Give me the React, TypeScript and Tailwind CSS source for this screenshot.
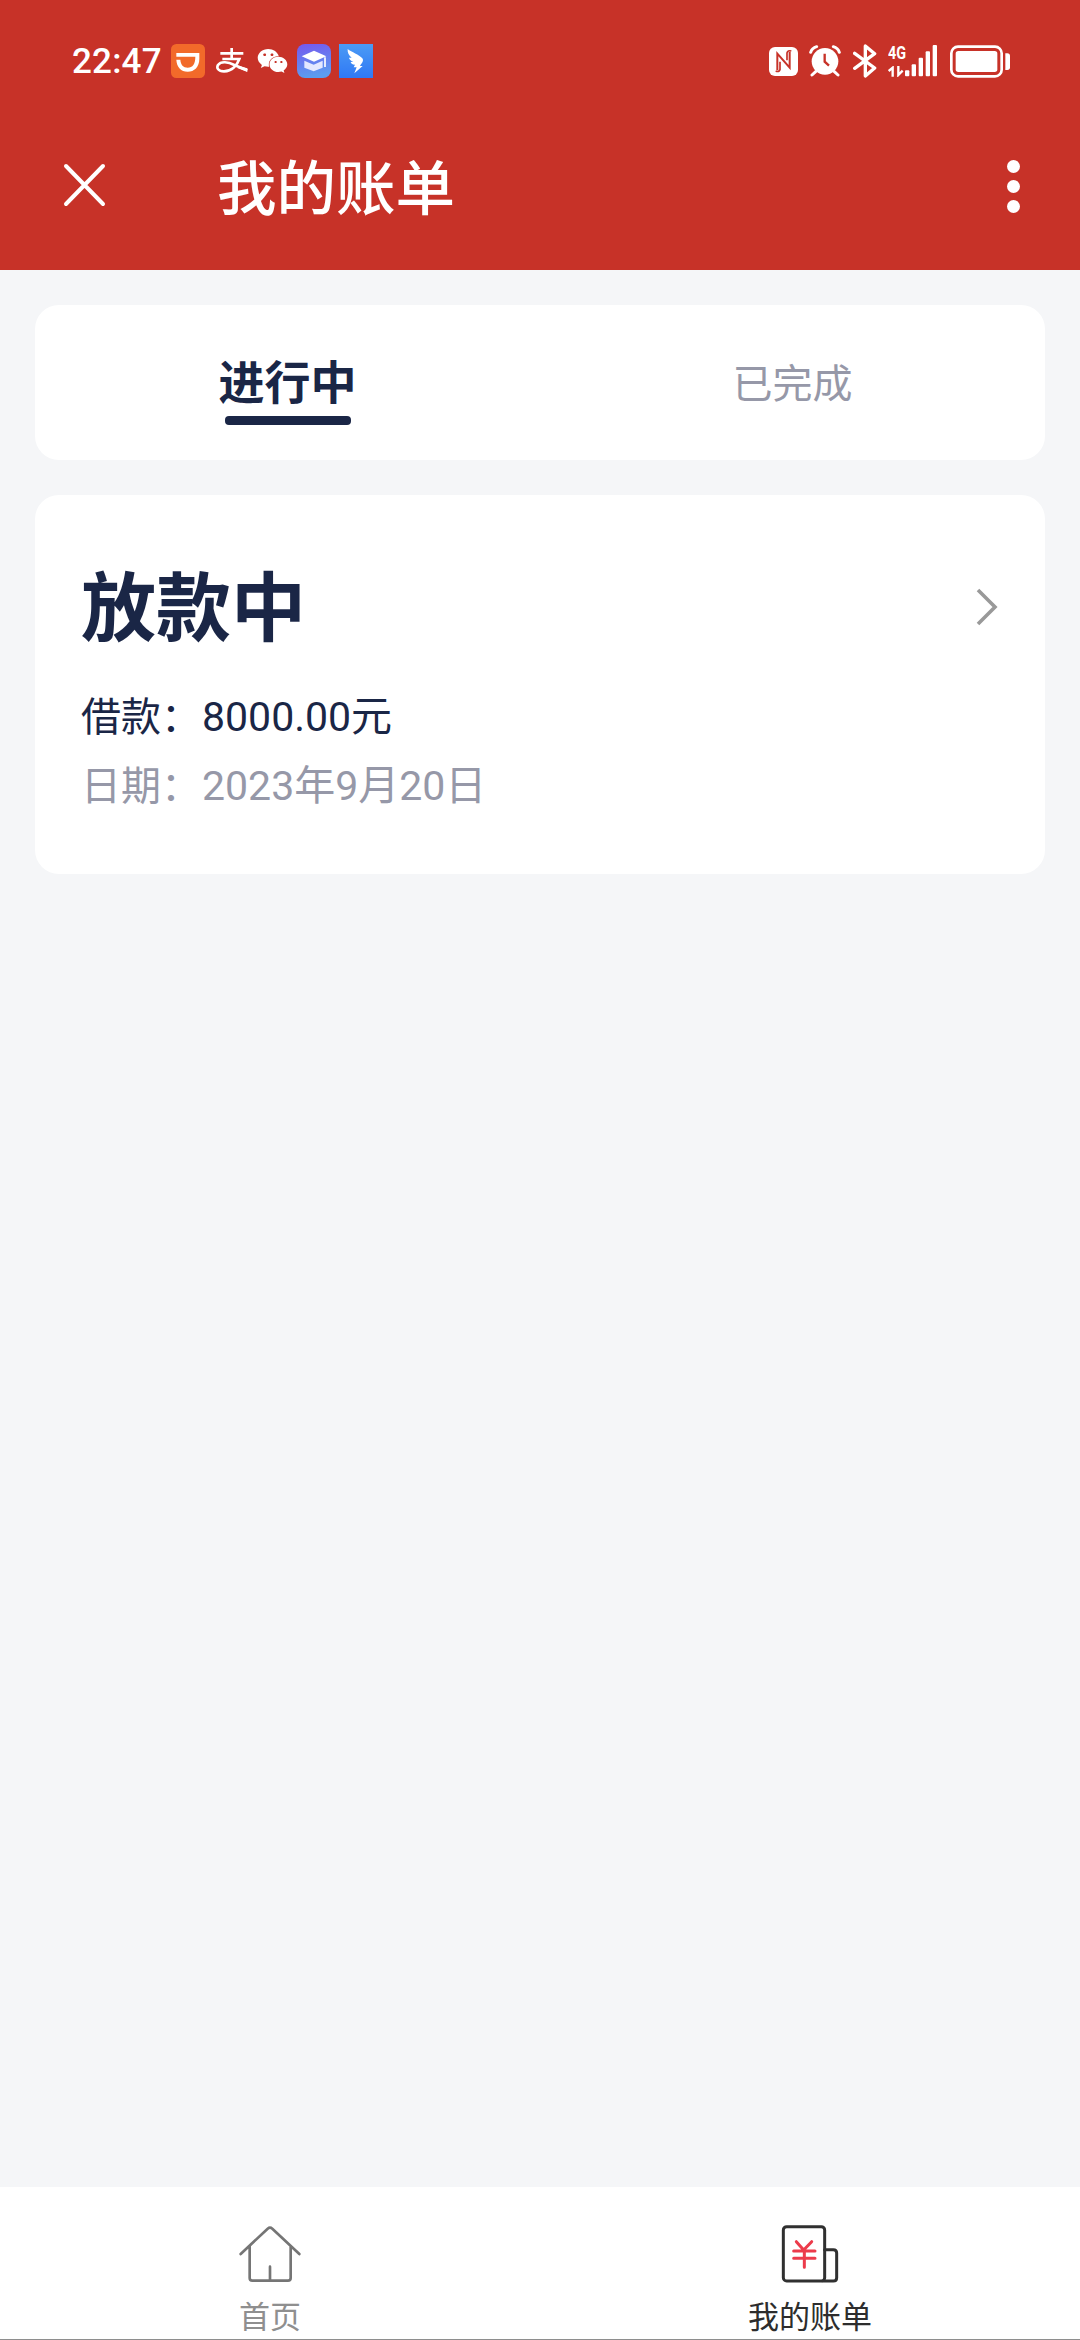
import { useState } from 'react';
import { FaWeixin } from 'react-icons/fa';

type Bill = {
  status: string;
  amount: string;
  date: string;
};

const bills: Bill[] = [{ status: '放款中', amount: '8000.00元', date: '2023年9月20日' }];

function StatusBar() {
  return (
    <div className="h-[122px] flex items-center justify-between pl-[71px] pr-[70px]">
      <div className="flex items-center">
        <span className="w-[100px] pl-px pt-[2px] text-[35px] leading-[34px] font-medium tracking-[0.2px] font-['Roboto',sans-serif]">22:47</span>

        {/* didi */}
        <svg className="w-[34px] h-[34px]" viewBox="0 0 102 102">
          <rect width="102" height="102" rx="16" fill="#f26a2a" />
          <path d="M16 27H85V44C85 69 70 83 50 83C30 83 17 69 16 47H28C29 62 37 71 50 71C65 71 73 60 73 38H16z" fill="#fff" />
        </svg>

        {/* alipay */}
        <svg className="w-[32px] h-[26px] ml-[11px]" viewBox="0 0 96 78" fill="none" stroke="#fff" strokeWidth="8">
          <path d="M13 16H82M47 0V32M19 33H70C64 50 49 69 24 70C6 70 1 60 6 51C15 38 37 42 55 51L94 67" />
          <path d="M72 55L94 61V72L64 60z" fill="#fff" stroke="none" />
        </svg>

        <FaWeixin className="w-[31px] h-[28px] ml-[9px]" />

        {/* school */}
        <svg className="w-[34px] h-[34px] ml-[9px]" viewBox="0 0 102 102">
          <defs>
            <linearGradient id="school" x1="0" y1="0" x2="0.2" y2="1">
              <stop offset="0" stopColor="#7657ee" />
              <stop offset="1" stopColor="#5b9cf0" />
            </linearGradient>
          </defs>
          <rect width="102" height="102" rx="24" fill="url(#school)" />
          <path d="M14 37L51 20L88 37L51 53z" fill="#fff" />
          <path d="M22 50L50 62L77 50V71L50 82L22 71z" fill="#e4e8ff" />
          <path d="M84 40V69" stroke="#fff" strokeWidth="5" />
        </svg>

        {/* dingtalk */}
        <svg className="w-[34px] h-[34px] ml-[8px]" viewBox="0 0 102 102">
          <defs>
            <linearGradient id="ding" x1="0" y1="0" x2="0" y2="1">
              <stop offset="0" stopColor="#4b9bf5" />
              <stop offset="1" stopColor="#2f78f5" />
            </linearGradient>
          </defs>
          <rect width="102" height="102" fill="url(#ding)" />
          <path d="M26 15C38 25 60 31 70 43C76 51 67 59 63 66H71L46 88L53 70H44L48 62C39 62 36 58 35 54L43 53C35 50 31 46 30 41L38 41C29 34 25 26 26 15z" fill="#fff" />
        </svg>
      </div>

      <div className="flex items-center">
        {/* nfc */}
        <svg className="w-[29px] h-[29px]" viewBox="0 0 87 87">
          <rect width="87" height="87" rx="18" fill="#fff" />
          <path d="M25 69V20L62 62V14" fill="none" stroke="#c73228" strokeWidth="6" />
          <path d="M20 72Q30 76 33 68V44M67 12Q56 9 54 18V40" fill="none" stroke="#c73228" strokeWidth="5" />
        </svg>

        {/* alarm */}
        <svg className="w-[32px] h-[32px] ml-[11px]" viewBox="0 0 96 96">
          <circle cx="48" cy="49" r="40" fill="#fff" />
          <path d="M5 22Q9 9 23 5M73 5Q87 9 91 22M20 80L9 90M76 80L87 90" fill="none" stroke="#fff" strokeWidth="9" strokeLinecap="round" />
          <path d="M47 26V50L60 62" fill="none" stroke="#c73228" strokeWidth="7" />
        </svg>

        {/* bluetooth */}
        <svg className="w-[24px] h-[34px] ml-[12px]" viewBox="0 0 72 102">
          <path d="M5 28L65 72L37 96V6L65 29L5 73" fill="none" stroke="#fff" strokeWidth="10" strokeLinecap="round" strokeLinejoin="round" />
        </svg>

        {/* signal */}
        <div className="flex items-end ml-[11px]">
          <div className="flex flex-col w-[18px]">
            <span className="text-[18px] leading-[16px] font-bold font-['Roboto',sans-serif] scale-x-[0.8] origin-left">4G</span>
            <svg className="w-[17px] h-[11px] mt-[5px]" viewBox="0 0 51 33" fill="none" stroke="#fff" strokeWidth="7">
              <path d="M2 15L14 5V32M31 0V27L44 14" />
            </svg>
          </div>
          <svg className="w-[32px] h-[32px] -ml-px" viewBox="0 0 96 96" fill="#fff">
            <rect x="0" y="76" width="13" height="18" rx="3" />
            <rect x="20" y="58" width="13" height="36" rx="3" />
            <rect x="41" y="38" width="13" height="56" rx="3" />
            <rect x="62" y="19" width="13" height="75" rx="3" />
            <rect x="83" y="0" width="13" height="94" rx="3" />
          </svg>
        </div>

        {/* battery */}
        <svg className="w-[60px] h-[33px] ml-[13px]" viewBox="0 0 180 99">
          <rect x="4" y="5" width="151" height="89" rx="20" fill="none" stroke="#fff" strokeWidth="8" />
          <rect x="17" y="18" width="125" height="63" rx="8" fill="#fff" />
          <path d="M166 25h6a8 8 0 0 1 8 8v34a8 8 0 0 1-8 8h-6z" fill="#fff" />
        </svg>
      </div>
    </div>
  );
}

function Header() {
  return (
    <header className="h-[270px] bg-[#c73228] text-white">
      <StatusBar />
      <div className="h-[128px] flex items-center pl-[63px] pr-[60px]">
        <svg className="w-[44px] h-[44px] mb-[2px]" viewBox="0 0 44 44" fill="none" stroke="currentColor" strokeWidth="4" strokeLinecap="round">
          <path d="M3 3L40 41M40 3L3 41" />
        </svg>
        <h1 className="ml-[110px] mb-[5px] text-[59.5px] leading-[80px] font-medium">我的账单</h1>
        <div className="ml-auto flex flex-col gap-[7px]">
          <span className="size-[13px] rounded-full bg-white" />
          <span className="size-[13px] rounded-full bg-white" />
          <span className="size-[13px] rounded-full bg-white" />
        </div>
      </div>
    </header>
  );
}

function BillCard({ bill }: { bill: Bill }) {
  return (
    <div className="h-[379px] bg-white rounded-[24px] px-[46px] pt-[64px]">
      <div className="flex items-center justify-between">
        <h2 className="text-[75px] leading-[88px] font-bold text-[#1a2646]">{bill.status}</h2>
        <svg className="w-[24px] h-[40px] mt-[8px]" viewBox="0 0 24 40" fill="none" stroke="#999" strokeWidth="3.6">
          <path d="M3 3L20 20L3 37" />
        </svg>
      </div>
      <p className="mt-[33px] h-[69px] text-[40px] leading-[69px] text-[#1a2646]">
        借款：<span className="ml-px text-[41px] font-['Roboto','Noto_Sans_CJK_SC',sans-serif]">{bill.amount}</span>
      </p>
      <p className="h-[69px] text-[40px] leading-[69px] text-[#9698a8]">
        日期：<span className="ml-px text-[41px] font-['Roboto','Noto_Sans_CJK_SC',sans-serif]">{bill.date}</span>
      </p>
    </div>
  );
}

function TabBar() {
  return (
    <nav className="h-[153px] bg-white border-b border-[#8e8e8e] grid grid-cols-2">
      <a className="flex flex-col items-center pt-[38px] text-[#8f8f8f]">
        <svg className="w-[62px] h-[60px]" viewBox="0 0 186 180" fill="none" stroke="#757575" strokeWidth="8" strokeLinecap="round" strokeLinejoin="round">
          <path d="M5 87L86 11Q93 5 100 11L181 87M32 63V159Q32 167 40 167H147Q155 167 155 159V63M93 125V166" />
        </svg>
        <span className="mt-[10px] text-[31px] leading-[40px]">首页</span>
      </a>
      <a className="flex flex-col items-center pt-[38px] text-[#2d2d2d]">
        <svg className="w-[58px] h-[60px]" viewBox="0 0 174 180" fill="none" stroke="#303030" strokeWidth="9" strokeLinecap="round" strokeLinejoin="round">
          <rect x="7" y="5" width="124" height="163" rx="10" />
          <path d="M131 74H157Q167 74 167 84V158Q167 168 157 168H125" />
          <path d="M46 50L68 75L92 50M38 78H102M38 100H102M70 78V127" stroke="#ec3b4b" />
        </svg>
        <span className="mt-[10px] text-[31px] leading-[40px]">我的账单</span>
      </a>
    </nav>
  );
}

export default function App() {
  const [tab, setTab] = useState(0);

  return (
    <div className="w-[1080px] h-[2340px] flex flex-col bg-[#f5f6f8] overflow-hidden font-['Noto_Sans_CJK_SC',sans-serif]">
      <Header />
      <main className="flex-1 flex flex-col gap-[35px] px-[35px] pt-[35px]">
        <div className="h-[155px] bg-white rounded-[24px] grid grid-cols-2">
          {['进行中', '已完成'].map((label, i) => (
            <button key={label} onClick={() => setTab(i)} className="flex flex-col items-center pt-[44px]">
              {tab === i ? (
                <>
                  <span className="text-[46px] leading-[60px] font-bold text-[#1a2646]">{label}</span>
                  <span className="mt-[7px] w-[126px] h-[9px] rounded-[4px] bg-[#1a2646]" />
                </>
              ) : (
                <span className="mt-[2px] text-[40px] leading-[60px] text-[#9698a8]">{label}</span>
              )}
            </button>
          ))}
        </div>
        {bills.map((bill) => (
          <BillCard key={bill.date} bill={bill} />
        ))}
      </main>
      <TabBar />
    </div>
  );
}
